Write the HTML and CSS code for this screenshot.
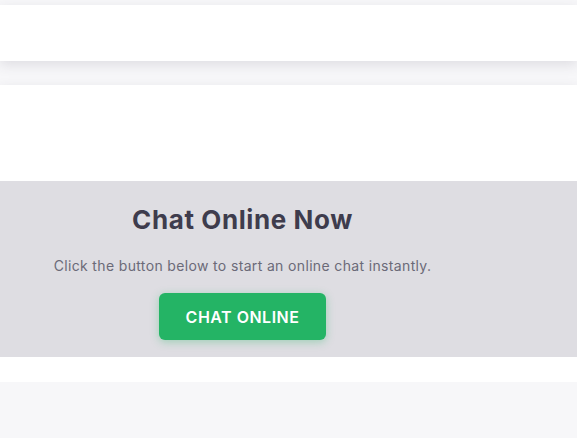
FILE: index.html
```html
<!DOCTYPE html>
<html>
<head>
<meta charset="utf-8">
<link rel="stylesheet" href="styles.css">
</head>
<body>
<div class="page">
  <div class="card card-top"></div>
  <div class="card card-main">
    <div class="spacer-top"></div>
    <section class="chat-band">
      <div class="chat-inner">
        <h2 class="chat-title">Chat Online Now</h2>
        <p class="chat-text">Click the button below to start an online chat instantly.</p>
        <a class="chat-btn">CHAT ONLINE</a>
      </div>
    </section>
    <div class="spacer-bottom"></div>
  </div>
</div>
</body>
</html>
```

FILE: styles.css
```css
html, body {
  margin: 0;
  padding: 0;
  background: #f7f7f9;
  font-family: Inter, "Noto Sans", sans-serif;
}
.page {
  padding-top: 5px;
  display: flex;
  flex-direction: column;
  gap: 24px;
}
.card {
  background: #fff;
  box-shadow: 0 4px 12px rgba(60, 55, 80, 0.13);
}
.card-top {
  height: 56px;
}
.spacer-top { height: 96px; }
.spacer-bottom { height: 25px; }
.chat-band {
  background: #dedde2;
  height: 176px;
  box-sizing: border-box;
}
.chat-inner {
  width: 485px;
  display: flex;
  flex-direction: column;
  align-items: center;
  padding-top: 22px;
}
.chat-title {
  margin: 0;
  font-size: 26px;
  font-weight: 700;
  color: #3e3c4d;
  line-height: 34px;
  letter-spacing: 0.6px;
}
.chat-text {
  margin: 18px 0 0;
  font-size: 14px;
  color: #6b6a78;
  line-height: 22px;
  letter-spacing: 0.35px;
}
.chat-btn {
  margin-top: 16px;
  width: 167px;
  height: 47px;
  box-sizing: border-box;
  display: flex;
  align-items: center;
  justify-content: center;
  background: #24b465;
  color: #fff;
  border-radius: 6px;
  font-size: 16px;
  font-weight: 600;
  letter-spacing: 0.5px;
  box-shadow: 0 2px 8px rgba(36, 180, 101, 0.35);
}
```
